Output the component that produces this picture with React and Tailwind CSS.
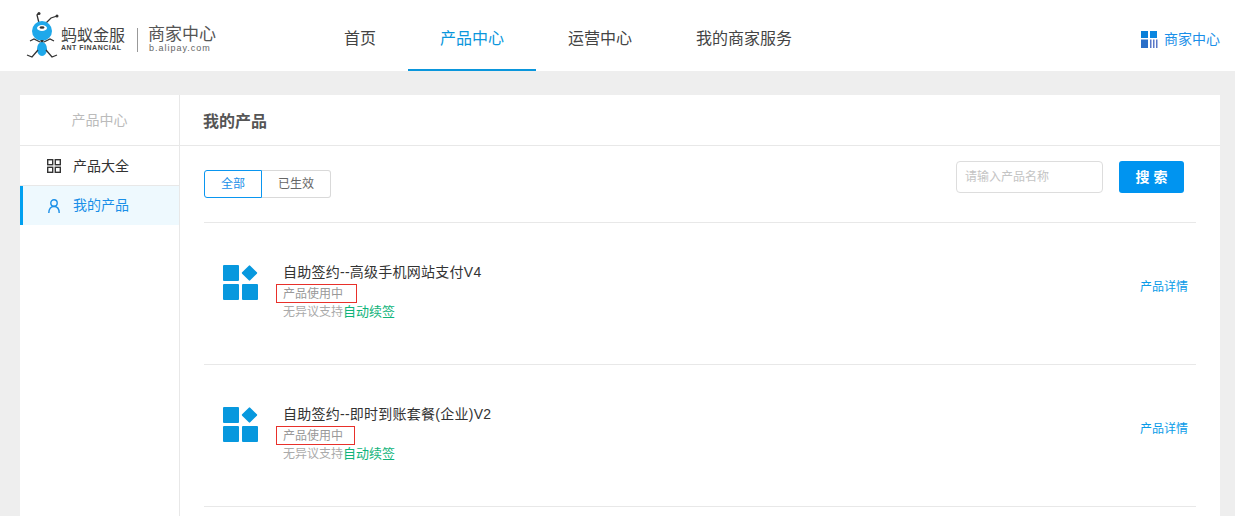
const CJK = "font-['Liberation_Sans','Noto_Sans_CJK_SC',sans-serif]";

const ProductIcon = () => (
  <svg width="36" height="36" viewBox="0 0 36 36" className="mt-[2px] shrink-0">
    <rect x="0" y="0" width="16" height="16" rx="1" fill="#0798de" />
    <rect x="20.8" y="2.3" width="11.4" height="11.4" rx="1" fill="#0798de" transform="rotate(45 26.5 8)" />
    <rect x="0" y="19" width="16" height="16" rx="1" fill="#0798de" />
    <rect x="19" y="19" width="16" height="16" rx="1" fill="#0798de" />
  </svg>
);

const products = [
  { name: "自助签约--高级手机网站支付V4", tagWidth: "w-[81px]" },
  { name: "自助签约--即时到账套餐(企业)V2", tagWidth: "w-[79px]" },
];

const App = () => {
  return (
    <div className={`${CJK} h-[516px] overflow-hidden bg-[#eeeeee]`}>
      <header className="flex h-[71px] items-center bg-white">
        <div className="flex w-[312px] shrink-0 items-center pl-[25px]">
          <svg width="34" height="50" viewBox="0 0 34 50">
            <path d="M14 12L12 4L14 2M21 12L26 7L32 5" stroke="#333" strokeWidth="1.3" fill="none" />
            <circle cx="14" cy="2.5" r="1.5" fill="#333" />
            <circle cx="32" cy="5" r="1.5" fill="#333" />
            <circle cx="17" cy="20" r="10" fill="#1fa8ea" />
            <ellipse cx="17" cy="17" rx="5" ry="3" fill="#fff" />
            <ellipse cx="17" cy="16.5" rx="2.5" ry="1.3" fill="#333" />
            <rect x="15.5" y="29" width="3" height="4" fill="#333" />
            <ellipse cx="17" cy="38" rx="5" ry="7" fill="#1fa8ea" />
            <path d="M15 31L9 28L5 30M19 31L25 28L29 30M13 39L7 46L2 44M21 39L27 46L32 44" stroke="#333" strokeWidth="1.3" fill="none" />
          </svg>
          <div className="ml-[2px] mt-[8px] flex w-[65px] flex-col">
            <span className="text-[16px] leading-[17px] text-[#444]">蚂蚁金服</span>
            <span className="whitespace-nowrap text-[7px] font-bold leading-[8px] tracking-[0.5px] text-[#444]">ANT FINANCIAL</span>
          </div>
          <div className="ml-[11px] mr-[10px] mt-[8px] h-[24px] w-px bg-[#999]" />
          <div className="mt-[8px] flex flex-col">
            <span className="text-[17px] leading-[17px] text-[#555]">商家中心</span>
            <span className="whitespace-nowrap pl-px text-[9px] leading-[10px] tracking-[1px] text-[#666]">b.alipay.com</span>
          </div>
        </div>
        <nav className="flex h-full text-[16px] text-[#444]">
          <a className="flex w-[96px] items-center justify-center border-b-2 border-transparent pt-[9px]">首页</a>
          <a className="flex w-[128px] items-center justify-center border-b-2 border-[#0a96dc] pt-[9px] text-[#0a96dc]">产品中心</a>
          <a className="flex w-[128px] items-center justify-center border-b-2 border-transparent pt-[9px]">运营中心</a>
          <a className="flex w-[160px] items-center justify-center border-b-2 border-transparent pt-[9px]">我的商家服务</a>
        </nav>
        <div className="ml-auto flex items-center gap-[6px] pr-[15px] pt-[8px] text-[14px] text-[#1a8fe8]">
          <svg width="18" height="18" viewBox="0 0 18 18">
            <rect x="1" y="0" width="7" height="7" fill="#0a7fd8" />
            <rect x="1" y="8.5" width="7" height="8.5" fill="#2a6fc8" />
            <rect x="10" y="0" width="7" height="7" fill="#0a86e0" />
            <rect x="10" y="8.5" width="1.5" height="8.5" fill="#5a78c8" />
            <rect x="13" y="8.5" width="1.5" height="8.5" fill="#5a78c8" />
            <rect x="16" y="8.5" width="1.5" height="8.5" fill="#5a78c8" />
          </svg>
          商家中心
        </div>
      </header>
      <div className="ml-[20px] mt-[24px] flex h-[421px] w-[1200px] bg-white">
        <aside className="w-[160px] shrink-0 border-r border-[#e8e8e8]">
          <div className="flex h-[51px] items-center justify-center border-b border-[#e8e8e8] pt-px text-[14px] text-[#bbb]">产品中心</div>
          <div className="flex h-[40px] items-center gap-[12px] border-b border-[#e8e8e8] pl-[27px] pt-px text-[14px] text-[#333]">
            <svg width="14" height="14" viewBox="0 0 14 14" fill="none" stroke="#333" strokeWidth="1.4">
              <rect x="0.7" y="0.7" width="5" height="5" />
              <rect x="8.3" y="0.7" width="5" height="5" />
              <rect x="0.7" y="8.3" width="5" height="5" />
              <rect x="8.3" y="8.3" width="5" height="5" />
            </svg>
            产品大全
          </div>
          <div className="flex h-[39px] items-center gap-[13px] border-l-[3px] border-[#00a0f0] bg-[#eef9fe] pl-[25px] text-[14px] text-[#1a8fe8]">
            <svg width="12" height="14" viewBox="0 0 12 14" fill="none" stroke="#1a8fe8" strokeWidth="1.4">
              <circle cx="6" cy="4" r="3.2" />
              <path d="M0.8 14c0-4 2-6.5 5.2-6.5s5.2 2.5 5.2 6.5" />
            </svg>
            我的产品
          </div>
        </aside>
        <main className="min-w-0 flex-1">
          <div className="flex h-[51px] items-center border-b border-[#e8e8e8] pl-[23px] pt-[3px] text-[16px] font-bold text-[#555]">我的产品</div>
          <div className="mx-[24px] flex h-[77px] items-start justify-between border-b border-[#e8e8e8]">
            <div className="mt-[24px] flex text-[12px]">
              <span className="flex h-[28px] w-[58px] items-center justify-center rounded-l-[3px] border border-[#0a96f0] text-[#1a8fe8]">全部</span>
              <span className="flex h-[28px] w-[69px] items-center justify-center rounded-r-[3px] border border-l-0 border-[#d9d9d9] text-[#666]">已生效</span>
            </div>
            <div className="mt-[15px] flex items-center pr-[12px]">
              <div className="flex h-[32px] w-[147px] items-center rounded-[4px] border border-[#ddd] pl-[8px] text-[12px] text-[#c4c4c4]">请输入产品名称</div>
              <button className="ml-[16px] h-[32px] w-[65px] rounded-[3px] bg-[#0094f0] text-[14px] font-bold text-white">搜 索</button>
            </div>
          </div>
          {products.map((p) => (
            <div key={p.name} className="mx-[24px] flex h-[142px] items-start border-b border-[#e8e8e8] pt-[40px]">
              <div className="ml-[19px] mr-[24px]"><ProductIcon /></div>
              <div className="flex-1 text-[12px]">
                <div className="text-[14px] leading-[18px] tracking-[0.25px] text-[#333]">{p.name}</div>
                <div className="relative mt-[3px] pt-px leading-[18px] text-[#999]">
                  产品使用中
                  <span className={`absolute -left-[7px] top-0 h-[19px] ${p.tagWidth} border border-[#e8302a]`} />
                </div>
                <div className="leading-[18px] text-[#aaa]">无异议支持<span className="text-[13px] text-[#0fb37a]">自动续签</span></div>
              </div>
              <a className="mt-[15px] pr-[8px] text-[12px] leading-[18px] text-[#0a9be8]">产品详情</a>
            </div>
          ))}
        </main>
      </div>
    </div>
  );
};

export default App;
